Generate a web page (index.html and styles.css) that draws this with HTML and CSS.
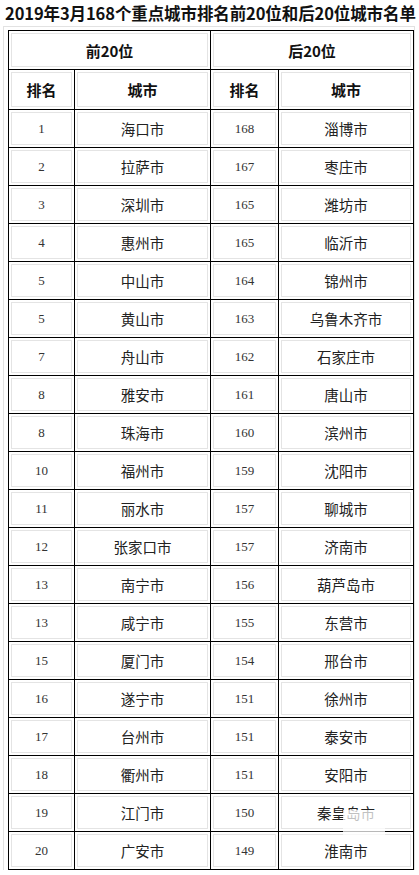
FILE: index.html
```html
<!DOCTYPE html>
<html lang="zh-CN">
<head>
<meta charset="utf-8">
<link rel="stylesheet" href="styles.css">
</head>
<body>
<h1 class="title">2019年3月168个重点城市排名前20位和后20位城市名单</h1>
<div class="frame">
<table class="rank">
<colgroup><col class="c1"><col class="c2"><col class="c3"><col class="c4"></colgroup>
<thead>
<tr class="h1"><th colspan="2">前20位</th><th colspan="2">后20位</th></tr>
<tr class="h2"><th>排名</th><th>城市</th><th>排名</th><th>城市</th></tr>
</thead>
<tbody>
<tr><td class="n">1</td><td>海口市</td><td class="n">168</td><td>淄博市</td></tr>
<tr><td class="n">2</td><td>拉萨市</td><td class="n">167</td><td>枣庄市</td></tr>
<tr><td class="n">3</td><td>深圳市</td><td class="n">165</td><td>潍坊市</td></tr>
<tr><td class="n">4</td><td>惠州市</td><td class="n">165</td><td>临沂市</td></tr>
<tr><td class="n">5</td><td>中山市</td><td class="n">164</td><td>锦州市</td></tr>
<tr><td class="n">5</td><td>黄山市</td><td class="n">163</td><td>乌鲁木齐市</td></tr>
<tr><td class="n">7</td><td>舟山市</td><td class="n">162</td><td>石家庄市</td></tr>
<tr><td class="n">8</td><td>雅安市</td><td class="n">161</td><td>唐山市</td></tr>
<tr><td class="n">8</td><td>珠海市</td><td class="n">160</td><td>滨州市</td></tr>
<tr><td class="n">10</td><td>福州市</td><td class="n">159</td><td>沈阳市</td></tr>
<tr><td class="n">11</td><td>丽水市</td><td class="n">157</td><td>聊城市</td></tr>
<tr><td class="n">12</td><td>张家口市</td><td class="n">157</td><td>济南市</td></tr>
<tr><td class="n">13</td><td>南宁市</td><td class="n">156</td><td>葫芦岛市</td></tr>
<tr><td class="n">13</td><td>咸宁市</td><td class="n">155</td><td>东营市</td></tr>
<tr><td class="n">15</td><td>厦门市</td><td class="n">154</td><td>邢台市</td></tr>
<tr><td class="n">16</td><td>遂宁市</td><td class="n">151</td><td>徐州市</td></tr>
<tr><td class="n">17</td><td>台州市</td><td class="n">151</td><td>泰安市</td></tr>
<tr><td class="n">18</td><td>衢州市</td><td class="n">151</td><td>安阳市</td></tr>
<tr><td class="n">19</td><td>江门市</td><td class="n">150</td><td>秦皇岛市</td></tr>
<tr><td class="n">20</td><td>广安市</td><td class="n">149</td><td>淮南市</td></tr>
</tbody>
</table>
<div class="watermark"></div>
</div>
</body>
</html>
```

FILE: styles.css
```css
html, body {
  margin: 0;
  padding: 0;
  background: #fff;
}
body {
  width: 419px;
  height: 875px;
  overflow: hidden;
  font-family: "Noto Sans CJK SC", "Noto Sans", sans-serif;
  color: #1a1a1a;
}
.title {
  margin: 0;
  padding: 2px 0 0 5px;
  height: 26px;
  box-sizing: border-box;
  font-size: 16.5px;
  line-height: 22px;
  font-weight: bold;
  color: #111;
  white-space: nowrap;
  letter-spacing: -0.1px;
}
.frame {
  position: relative;
  margin: 0 0 0 3px;
  padding: 3px 0 0 4px;
  width: 412px;
  box-sizing: border-box;
  border-left: 1px solid #e2e2e2;
  border-top: 1px solid #e2e2e2;
  border-right: 1px solid #e2e2e2;
}
.rank {
  border-collapse: collapse;
  table-layout: fixed;
  width: 405px;
}
.c1 { width: 66px; }
.c2 { width: 136px; }
.c3 { width: 68px; }
.c4 { width: 135px; }
.rank th, .rank td {
  border: 1px solid #000;
  padding: 0;
  text-align: center;
  vertical-align: middle;
  box-shadow: inset 0 0 0 2px #fff, inset 0 0 0 3px #e4e4e4;
}
.rank th {
  font-weight: bold;
  font-size: 15px;
  color: #111;
}
.h1 th { height: 38px; }
.h2 th { height: 39px; }
.rank td {
  height: 37px;
  font-size: 14.5px;
  color: #222;
}
.rank td.n {
  font-size: 13px;
  font-family: "Liberation Serif", "DejaVu Serif", serif;
  color: #333;
}
.watermark {
  position: absolute;
  left: 339px;
  top: 783px;
  width: 42px;
  height: 26px;
  background: rgba(255, 255, 255, 0.72);
}
```
